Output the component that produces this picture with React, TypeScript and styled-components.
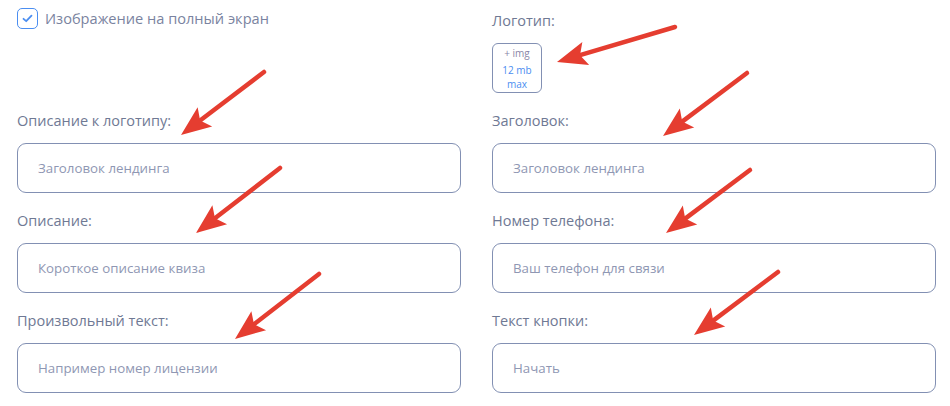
import React from "react";
import styled, { createGlobalStyle } from "styled-components";

const GlobalStyle = createGlobalStyle`
  html, body { margin: 0; padding: 0; background: #ffffff; }
  body { font-family: "Open Sans", "Noto Sans", sans-serif; }
  * { box-sizing: border-box; }
`;

const Page = styled.div`
  position: relative;
  width: 950px;
  height: 406px;
  padding: 0 14px 0 17px;
  overflow: hidden;
`;

const Grid = styled.div`
  display: grid;
  grid-template-columns: 444px 444px;
  column-gap: 31px;
  grid-auto-rows: 100px;
  grid-template-rows: 111px;
`;

const Cell = styled.div`
  display: flex;
  flex-direction: column;
`;

const CheckRow = styled.label`
  display: flex;
  align-items: center;
  gap: 7px;
  margin-top: 7px;
  color: #7a83a0;
  font-size: 14.6px;
  line-height: 22px;
`;

const CheckBox = styled.span`
  width: 21px;
  height: 21px;
  border: 1.5px solid #4b8ef1;
  border-radius: 5px;
  display: flex;
  align-items: center;
  justify-content: center;
`;

const Label = styled.div<{ $top?: number }>`
  margin-top: ${(p) => p.$top ?? 0}px;
  color: #6f7994;
  font-size: 14.5px;
  line-height: 20px;
  height: 20px;
  margin-bottom: 12px;
`;

const Input = styled.div`
  height: 50px;
  border: 1px solid #8290b3;
  border-radius: 9px;
  display: flex;
  align-items: center;
  padding-left: 20px;
  color: #8f97b3;
  font-size: 13.3px;
`;

const UploadBox = styled.div`
  width: 50px;
  height: 50px;
  border: 1px solid #8290b3;
  border-radius: 6px;
  display: flex;
  flex-direction: column;
  align-items: center;
  padding-top: 2px;
  font-size: 10px;
  line-height: 14px;
`;

const UploadPlus = styled.span`
  color: #8a86a6;
  margin-bottom: 3px;
`;

const UploadInfo = styled.span`
  color: #4b8ef1;
  text-align: center;
  font-size: 10px;
  line-height: 14px;
`;

const Overlay = styled.svg`
  position: absolute;
  left: 0;
  top: 0;
  pointer-events: none;
`;

type ArrowSpec = { x1: number; y1: number; x2: number; y2: number };

const arrows: ArrowSpec[] = [
  { x1: 264, y1: 72, x2: 181, y2: 135 },
  { x1: 675, y1: 27, x2: 557, y2: 62 },
  { x1: 747, y1: 73, x2: 663, y2: 136 },
  { x1: 280, y1: 168, x2: 196, y2: 233 },
  { x1: 750, y1: 170, x2: 666, y2: 233 },
  { x1: 319, y1: 274, x2: 235, y2: 339 },
  { x1: 778, y1: 272, x2: 694, y2: 335 },
];

function Arrow({ x1, y1, x2, y2 }: ArrowSpec) {
  const dx = x2 - x1;
  const dy = y2 - y1;
  const len = Math.hypot(dx, dy);
  const ux = dx / len;
  const uy = dy / len;
  const headLen = 30;
  const headW = 12;
  const bx = x2 - ux * headLen;
  const by = y2 - uy * headLen;
  const nx = -uy;
  const ny = ux;
  const notchX = x2 - ux * (headLen - 6);
  const notchY = y2 - uy * (headLen - 6);
  const pts = [
    `${x2},${y2}`,
    `${bx + nx * headW},${by + ny * headW}`,
    `${notchX},${notchY}`,
    `${bx - nx * headW},${by - ny * headW}`,
  ].join(" ");
  return (
    <g>
      <line
        x1={x1}
        y1={y1}
        x2={notchX}
        y2={notchY}
        stroke="#e53d30"
        strokeWidth={4.5}
        strokeLinecap="round"
      />
      <polygon points={pts} fill="#e53d30" />
    </g>
  );
}

type FieldSpec = { label: string; placeholder: string };

const fields: FieldSpec[] = [
  { label: "Описание к логотипу:", placeholder: "Заголовок лендинга" },
  { label: "Заголовок:", placeholder: "Заголовок лендинга" },
  { label: "Описание:", placeholder: "Короткое описание квиза" },
  { label: "Номер телефона:", placeholder: "Ваш телефон для связи" },
  { label: "Произвольный текст:", placeholder: "Например номер лицензии" },
  { label: "Текст кнопки:", placeholder: "Начать" },
];

export default function App() {
  return (
    <>
      <GlobalStyle />
      <Page>
        <Grid>
          <Cell>
            <CheckRow>
              <CheckBox>
                <svg width="11" height="9" viewBox="0 0 11 9">
                  <path
                    d="M1.5 4.8 L4.2 7.2 L9.5 1.6"
                    fill="none"
                    stroke="#4b8ef1"
                    strokeWidth="1.8"
                    strokeLinecap="round"
                    strokeLinejoin="round"
                  />
                </svg>
              </CheckBox>
              Изображение на полный экран
            </CheckRow>
          </Cell>
          <Cell>
            <Label $top={11}>Логотип:</Label>
            <UploadBox>
              <UploadPlus>+ img</UploadPlus>
              <UploadInfo>12 mb</UploadInfo>
              <UploadInfo>max</UploadInfo>
            </UploadBox>
          </Cell>
          {fields.map((f) => (
            <Cell key={f.label}>
              <Label>{f.label}</Label>
              <Input>{f.placeholder}</Input>
            </Cell>
          ))}
        </Grid>
        <Overlay width="950" height="406" viewBox="0 0 950 406">
          {arrows.map((a, i) => (
            <Arrow key={i} {...a} />
          ))}
        </Overlay>
      </Page>
    </>
  );
}
